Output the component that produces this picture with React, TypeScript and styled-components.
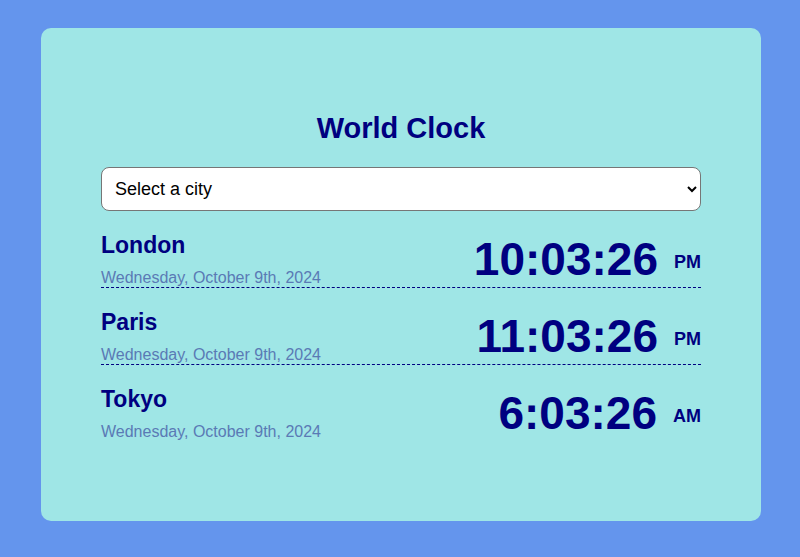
import styled, { createGlobalStyle } from "styled-components";

const GlobalStyle = createGlobalStyle`
  html, body {
    margin: 0;
    padding: 0;
    background: #6495ed;
  }
  body {
    font-family: "Liberation Sans", Arial, sans-serif;
  }
`;

const Page = styled.div`
  min-height: 557px;
  box-sizing: border-box;
  padding: 28px 39px 36px 41px;
`;

const Card = styled.div`
  background: #9fe6e6;
  border-radius: 10px;
  padding: 60px;
  height: 493px;
  box-sizing: border-box;
`;

const Title = styled.h1`
  margin: 24px 0 22px;
  text-align: center;
  color: #000080;
  font-size: 29px;
  font-weight: bold;
`;

const CitySelect = styled.select`
  display: block;
  width: 100%;
  height: 44px;
  padding: 0 9px;
  border: 1px solid #767676;
  border-radius: 8px;
  background: #fff;
  color: #000;
  font-family: "Liberation Sans", Arial, sans-serif;
  font-size: 18px;
`;

const ClockList = styled.ul`
  list-style: none;
  margin: 0;
  padding: 0;
`;

const ClockRow = styled.li`
  display: flex;
  justify-content: space-between;
  align-items: center;
  padding: 21px 0 0;
  border-bottom: 1px dashed #000080;
  &:last-child {
    border-bottom: none;
  }
`;

const CityInfo = styled.div`
  display: flex;
  flex-direction: column;
  gap: 10px;
`;

const CityName = styled.span`
  color: #000080;
  font-weight: bold;
  font-size: 23px;
`;

const DateText = styled.span`
  color: #5a7ab5;
  font-size: 16px;
`;

const TimeBox = styled.div`
  color: #000080;
  font-weight: bold;
  font-size: 46px;
  line-height: 1;
  white-space: nowrap;
  margin-top: -2px;
`;

const Meridiem = styled.span`
  display: inline-block;
  margin-left: 16px;
  font-size: 18px;
  vertical-align: 7px;
`;

const clocks = [
  { city: "London", time: "10:03:26", ampm: "PM" },
  { city: "Paris", time: "11:03:26", ampm: "PM" },
  { city: "Tokyo", time: "6:03:26", ampm: "AM" },
];

export default function App() {
  return (
    <>
      <GlobalStyle />
      <Page>
        <Card>
          <Title>World Clock</Title>
          <CitySelect defaultValue="">
            <option value="">Select a city</option>
            <option value="ny">New York</option>
            <option value="sydney">Sydney</option>
          </CitySelect>
          <ClockList>
            {clocks.map((c) => (
              <ClockRow key={c.city}>
                <CityInfo>
                  <CityName>{c.city}</CityName>
                  <DateText>Wednesday, October 9th, 2024</DateText>
                </CityInfo>
                <TimeBox>
                  {c.time}
                  <Meridiem>{c.ampm}</Meridiem>
                </TimeBox>
              </ClockRow>
            ))}
          </ClockList>
        </Card>
      </Page>
    </>
  );
}
